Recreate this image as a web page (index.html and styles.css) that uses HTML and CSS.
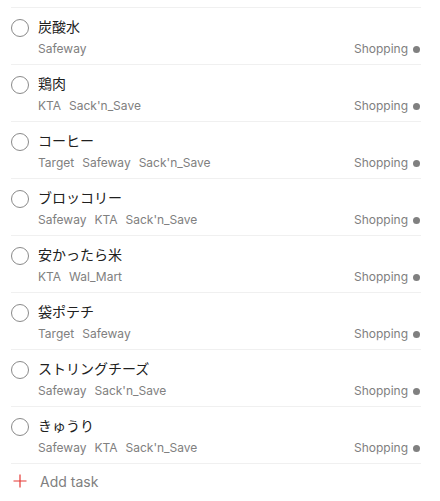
FILE: index.html
```html
<!DOCTYPE html>
<html lang="ja">
<head>
<meta charset="utf-8">
<link rel="stylesheet" href="styles.css">
</head>
<body>
<div class="list">
  <div class="task">
    <span class="check"></span>
    <div class="body">
      <div class="title">炭酸水</div>
      <div class="meta"><div class="tags"><span>Safeway</span></div><div class="project">Shopping<span class="dot"></span></div></div>
    </div>
  </div>
  <div class="task">
    <span class="check"></span>
    <div class="body">
      <div class="title">鶏肉</div>
      <div class="meta"><div class="tags"><span>KTA</span><span>Sack'n_Save</span></div><div class="project">Shopping<span class="dot"></span></div></div>
    </div>
  </div>
  <div class="task">
    <span class="check"></span>
    <div class="body">
      <div class="title">コーヒー</div>
      <div class="meta"><div class="tags"><span>Target</span><span>Safeway</span><span>Sack'n_Save</span></div><div class="project">Shopping<span class="dot"></span></div></div>
    </div>
  </div>
  <div class="task">
    <span class="check"></span>
    <div class="body">
      <div class="title">ブロッコリー</div>
      <div class="meta"><div class="tags"><span>Safeway</span><span>KTA</span><span>Sack'n_Save</span></div><div class="project">Shopping<span class="dot"></span></div></div>
    </div>
  </div>
  <div class="task">
    <span class="check"></span>
    <div class="body">
      <div class="title">安かったら米</div>
      <div class="meta"><div class="tags"><span>KTA</span><span>Wal_Mart</span></div><div class="project">Shopping<span class="dot"></span></div></div>
    </div>
  </div>
  <div class="task">
    <span class="check"></span>
    <div class="body">
      <div class="title">袋ポテチ</div>
      <div class="meta"><div class="tags"><span>Target</span><span>Safeway</span></div><div class="project">Shopping<span class="dot"></span></div></div>
    </div>
  </div>
  <div class="task">
    <span class="check"></span>
    <div class="body">
      <div class="title">ストリングチーズ</div>
      <div class="meta"><div class="tags"><span>Safeway</span><span>Sack'n_Save</span></div><div class="project">Shopping<span class="dot"></span></div></div>
    </div>
  </div>
  <div class="task">
    <span class="check"></span>
    <div class="body">
      <div class="title">きゅうり</div>
      <div class="meta"><div class="tags"><span>Safeway</span><span>KTA</span><span>Sack'n_Save</span></div><div class="project">Shopping<span class="dot"></span></div></div>
    </div>
  </div>
  <div class="add">
    <svg class="plus" width="14" height="14" viewBox="0 0 14 14"><path d="M7 0.5V13.5M0.5 7H13.5" stroke="#e53935" stroke-width="1.2" fill="none"/></svg>
    <span class="add-label">Add task</span>
  </div>
</div>
</body>
</html>
```
FILE: styles.css
```css
html, body {
  margin: 0;
  padding: 0;
  background: #fff;
}
body {
  font-family: Inter, "Noto Sans CJK JP", sans-serif;
  color: #202020;
}
.list {
  margin: 7px 0 0 11px;
  width: 410px;
  border-top: 1px solid #f0f0f0;
}
.task {
  display: flex;
  align-items: flex-start;
  border-bottom: 1px solid #f0f0f0;
  padding: 11px 0 8px 0;
  height: 37px;
}
.check {
  width: 16px;
  height: 16px;
  border: 1px solid #8a8a8a;
  border-radius: 50%;
  flex: none;
  margin-right: 9px;
}
.body {
  flex: 1;
  min-width: 0;
}
.title {
  font-size: 14px;
  line-height: 18px;
  margin-top: -1px;
}
.meta {
  display: flex;
  justify-content: space-between;
  align-items: center;
  margin-top: 5px;
  font-size: 12px;
  line-height: 16px;
  color: #808080;
}
.tags {
  display: flex;
  gap: 8px;
}
.project {
  display: flex;
  align-items: center;
}
.dot {
  width: 7px;
  height: 7px;
  border-radius: 50%;
  background: #808080;
  margin-left: 5px;
  margin-right: 1px;
}
.add {
  display: flex;
  align-items: center;
  height: 34px;
}
.plus {
  margin-left: 2px;
  margin-right: 13px;
}
.add-label {
  font-size: 14px;
  color: #808080;
}
```
